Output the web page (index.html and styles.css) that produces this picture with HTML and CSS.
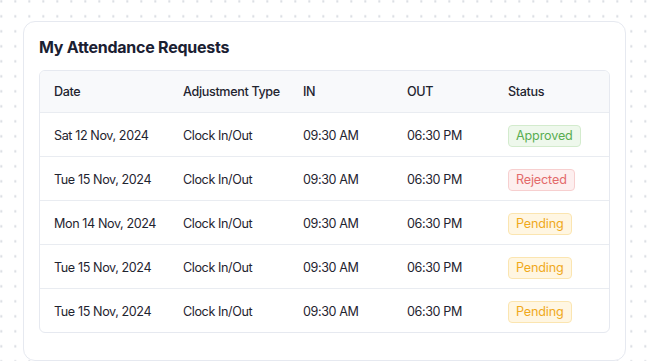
FILE: index.html
```html
<!DOCTYPE html>
<html>
<head>
<meta charset="utf-8">
<link rel="stylesheet" href="styles.css">
</head>
<body>
<div class="card">
  <h2 class="title">My Attendance Requests</h2>
  <div class="table">
    <div class="row head">
      <div>Date</div><div>Adjustment Type</div><div>IN</div><div>OUT</div><div>Status</div>
    </div>
    <div class="row">
      <div>Sat 12 Nov, 2024</div><div>Clock In/Out</div><div>09:30 AM</div><div>06:30 PM</div><div><span class="badge approved">Approved</span></div>
    </div>
    <div class="row">
      <div>Tue 15 Nov, 2024</div><div>Clock In/Out</div><div>09:30 AM</div><div>06:30 PM</div><div><span class="badge rejected">Rejected</span></div>
    </div>
    <div class="row">
      <div>Mon 14 Nov, 2024</div><div>Clock In/Out</div><div>09:30 AM</div><div>06:30 PM</div><div><span class="badge pending">Pending</span></div>
    </div>
    <div class="row">
      <div>Tue 15 Nov, 2024</div><div>Clock In/Out</div><div>09:30 AM</div><div>06:30 PM</div><div><span class="badge pending">Pending</span></div>
    </div>
    <div class="row">
      <div>Tue 15 Nov, 2024</div><div>Clock In/Out</div><div>09:30 AM</div><div>06:30 PM</div><div><span class="badge pending">Pending</span></div>
    </div>
  </div>
</div>
</body>
</html>
```
FILE: styles.css
```css
html, body {
  margin: 0;
  padding: 0;
}
body {
  width: 647px;
  height: 361px;
  overflow: hidden;
  background-color: #ffffff;
  background-image: radial-gradient(circle, #d9dce2 1px, transparent 1.3px);
  background-size: 14px 15px;
  background-position: -5.7px -6.2px;
  font-family: Inter, "Noto Sans", sans-serif;
  color: #1f2430;
  padding-top: 21px;
  padding-left: 23px;
  box-sizing: border-box;
}
.card {
  width: 603px;
  height: 340px;
  box-sizing: border-box;
  background: #ffffff;
  border: 1px solid #e6e9f0;
  border-radius: 12px;
  padding: 14px 15px;
}
.title {
  margin: 0 0 12px 0;
  font-size: 16px;
  line-height: 22px;
  font-weight: 700;
  color: #1a2032;
  letter-spacing: -0.25px;
}
.table {
  border: 1px solid #e6e9f0;
  border-radius: 6px;
  overflow: hidden;
  width: 571px;
  box-sizing: border-box;
}
.row {
  display: grid;
  grid-template-columns: 129px 120px 104px 101px 1fr;
  padding-left: 14px;
  padding-top: 2px;
  height: 44px;
  align-items: center;
  font-size: 12.6px;
  letter-spacing: -0.4px;
  font-variant-numeric: proportional-nums;
  border-top: 1px solid #e9ecf1;
  box-sizing: border-box;
  color: #1f2430;
}
.row.head {
  border-top: none;
  padding-top: 0;
  height: 41px;
  background: #f8f9fb;
  font-weight: 500;
  letter-spacing: -0.35px;
}
.badge {
  display: inline-block;
  padding: 0 7px;
  height: 22px;
  line-height: 20px;
  box-sizing: border-box;
  border-radius: 4px;
  border: 1px solid;
  font-size: 12.6px;
  letter-spacing: -0.15px;
}
.approved {
  background: #eef8ec;
  border-color: #d3ebcd;
  color: #59ad51;
}
.rejected {
  background: #fdefef;
  border-color: #f7cfcf;
  color: #e36a6a;
}
.pending {
  background: #fff6e2;
  border-color: #fbe5b0;
  color: #f0a91b;
}
```
